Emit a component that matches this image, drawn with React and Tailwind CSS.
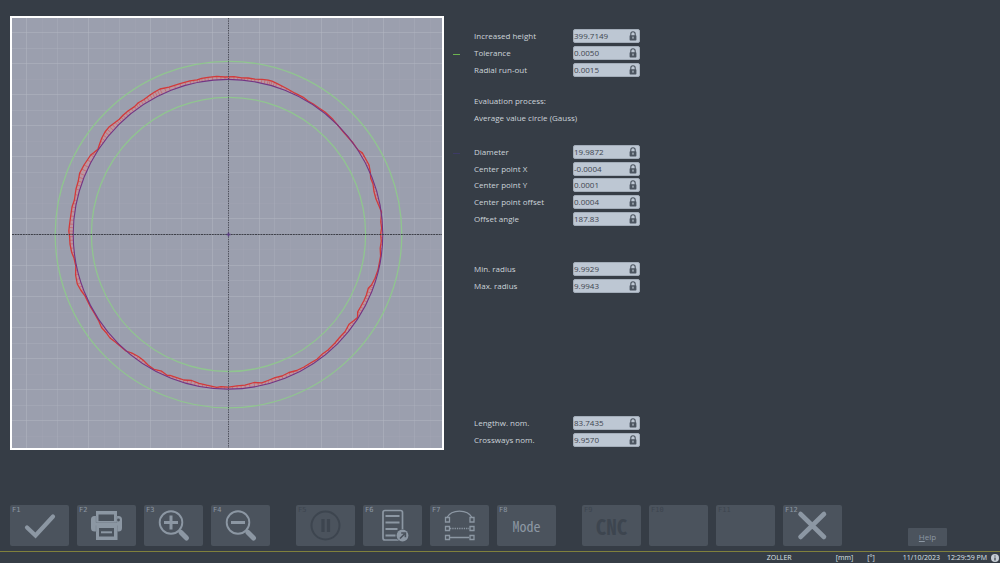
import React from "react";

const CENTER = { x: 228, y: 234.3 };
const MEAN_RADIUS = 154.8;

/* Measured contour, clockwise from the top */
const CONTOUR = [
  [225, 77], [234, 76.6], [241.7, 77.9], [248, 78], [255, 79.2], [262, 79.3], [268.3, 80.2], [272, 81.2], [276.7, 83.3],
  [286.7, 88.5], [295, 93.2], [303.3, 97.3], [308, 101], [313.3, 104], [319, 108], [325, 112], [332.3, 118.7],
  [338.3, 125.8], [344.3, 133], [353.3, 143.3], [358, 150], [362.3, 152.9], [366, 159.5], [369, 165], [370.3, 172],
  [370.7, 178.3], [373, 184], [374, 191.7], [376, 199], [379, 206], [381.5, 212], [380.8, 222], [381.6, 228],
  [380.6, 234], [381.3, 241], [380.2, 248.3], [380.6, 256], [379.6, 261.7], [378, 270], [375, 278.3], [371.5, 285],
  [368.3, 288.3], [366.4, 295], [364, 300.5], [360.5, 307], [357.7, 311.8], [357.5, 317.5], [354, 320.5],
  [349, 324.3], [345, 331.7], [340, 337], [335, 343], [328, 350], [321.7, 354.6], [317, 359.3], [311.7, 362.3],
  [304, 367], [296.7, 370.5], [289, 372.5], [282, 376], [275, 377.7], [268, 380.5], [261.7, 382.8], [254, 382.5],
  [245, 385.2], [237, 385.8], [228.3, 387.2], [221, 386.6], [216.7, 387.3], [206.7, 385.2], [199, 383.4],
  [191.7, 380.5], [184, 380], [176.7, 377.6], [170, 375.3], [167, 375.3], [161.7, 371.2], [154, 369.4],
  [148.3, 365.3], [143, 360], [138.3, 356.5], [132, 353.2], [126, 351], [115, 341.7], [110, 338], [106.7, 333.3],
  [101.5, 327.5], [99, 321.5], [94.5, 313.5], [90.5, 307], [85, 295.9], [81, 290.5], [77.3, 284], [75.6, 275],
  [75.8, 266], [74, 258], [71.7, 252.5], [70, 244], [69.6, 236.7], [68.8, 231], [69.6, 224], [70.7, 216],
  [72, 207], [74.4, 200], [76, 189], [78.3, 181], [79.6, 173.3], [84, 165], [90.7, 155], [94, 152.5],
  [97.9, 149.3], [99.6, 144], [101.7, 138.3], [105, 132], [109.3, 126.7], [115, 122.5], [119.3, 119.3],
  [123, 115.3], [128.3, 110.7], [134.5, 106.6], [138.3, 102.7], [144, 99.5], [150, 95], [155, 91.8], [160, 89],
  [169, 87.2], [180, 83.7], [190, 80.9], [197, 79.9], [201.7, 78.3], [208, 77.4], [216.7, 76.3],
];

const contourPath = "M" + CONTOUR.map((p) => p.join(" ")).join("L") + "Z";
const meanPath =
  `M${CENTER.x - MEAN_RADIUS} ${CENTER.y}` +
  `a${MEAN_RADIUS} ${MEAN_RADIUS} 0 1 1 ${2 * MEAN_RADIUS} 0` +
  `a${MEAN_RADIUS} ${MEAN_RADIUS} 0 1 1 ${-2 * MEAN_RADIUS} 0Z`;

/* Deviation whiskers between the mean circle and the contour */
const whiskers = CONTOUR.flatMap((p, i) => {
  const q = CONTOUR[(i + 1) % CONTOUR.length];
  return [0, 0.5].map((t) => {
    const x = p[0] + (q[0] - p[0]) * t;
    const y = p[1] + (q[1] - p[1]) * t;
    const d = Math.hypot(x - CENTER.x, y - CENTER.y);
    const k = MEAN_RADIUS / d;
    return `M${x.toFixed(1)} ${y.toFixed(1)}L${(CENTER.x + (x - CENTER.x) * k).toFixed(1)} ${(CENTER.y + (y - CENTER.y) * k).toFixed(1)}`;
  });
}).join("");

const STRONG_X = [26, 88, 150, 212, 259, 321, 383];
const SOFT_X = [57, 119, 181, 274, 352, 414];
const FAINT_X = [42, 73, 104, 135, 166, 197, 243, 290, 306, 337, 368, 399, 430];
const STRONG_Y = [32, 63, 94, 125, 156, 218, 265, 296, 327, 358, 389, 420];
const SOFT_Y = [48, 110, 172, 280, 343, 405];
const FAINT_Y = [79, 141, 187, 203, 249, 312, 374, 436];

const vLines = (xs) => xs.map((x) => `M${x + 0.5} 17V449`).join("");
const hLines = (ys) => ys.map((y) => `M11 ${y + 0.5}H443`).join("");

function RunoutChart() {
  return (
    <svg viewBox="10 16 434 434" className="ml-[10px] block aspect-square w-[43.4%] shrink-0" role="img" aria-label="Radial run-out">
      <rect x="10" y="16" width="434" height="434" fill="#fff" />
      <rect x="12" y="18" width="430" height="430" fill="#9b9fae" />
      <g fill="none" stroke="#b3b7c3" strokeWidth="1" clipPath="url(#plot)">
        <path d={vLines(STRONG_X) + hLines(STRONG_Y)} opacity="0.48" />
        <path d={vLines(SOFT_X) + hLines(SOFT_Y)} opacity="0.3" />
        <path d={vLines(FAINT_X) + hLines(FAINT_Y)} opacity="0.12" />
      </g>
      <clipPath id="plot">
        <rect x="12" y="18" width="430" height="430" />
      </clipPath>
      <g fill="none" stroke="#90c58f" strokeWidth="1.3">
        <circle cx="228.5" cy="234.6" r="173.3" />
        <circle cx="228.5" cy="234.4" r="137.1" />
      </g>
      <path d={contourPath + meanPath} fillRule="evenodd" fill="#d98f94" opacity="0.5" />
      <path d={whiskers} fill="none" stroke="#c8484e" strokeWidth="0.7" opacity="0.7" />
      <path d={contourPath} fill="none" stroke="#d23a3a" strokeWidth="1.3" strokeLinejoin="round" />
      <path d={meanPath} fill="none" stroke="#723585" strokeWidth="1.1" />
      <path d="M12 234.5H442" stroke="#3e4049" strokeWidth="1" strokeDasharray="2 0.7" />
      <path d="M228.5 18V448" stroke="#4c4e59" strokeWidth="1" strokeDasharray="1.4 1" />
      <path d="M226.5 234.5h4M228.5 232.5v4" stroke="#5b3f80" strokeWidth="1.3" />
    </svg>
  );
}

function Lock() {
  return (
    <svg viewBox="0 0 8 10" className="h-[10px] w-[8px] shrink-0" aria-hidden="true">
      <path d="M1.8 5V3a2.2 2.2 0 0 1 4.4 0v2" fill="none" stroke="#4c5560" strokeWidth="1.1" />
      <rect x="0.6" y="4.3" width="6.8" height="5.1" rx="0.7" fill="#4c5560" />
      <path d="M4 5.6v2.4M3.4 6.3h1.2" stroke="#b7c1cc" strokeWidth="0.8" />
    </svg>
  );
}

function Field({ label, value, marker = "border-transparent" }) {
  const id = label.toLowerCase().replace(/[^a-z]+/g, "-");
  return (
    <div className="flex items-center">
      <span className={`mr-[14px] h-[4px] w-[7px] border-b ${marker}`} />
      <label htmlFor={id} className="w-[99px] whitespace-nowrap">{label}</label>
      <div className="flex h-[14px] w-[67px] items-center rounded-[2px] border border-[#a3adb9] bg-[#bdc7d3] pr-[2px]">
        <input id={id} readOnly defaultValue={value} className="h-[12px] w-full min-w-0 bg-transparent text-[8px] leading-[12px] font-medium text-[#3d454f] outline-none" />
        <Lock />
      </div>
    </div>
  );
}

const icon = "h-[41px] w-[59px]";

const CheckIcon = () => (
  <svg viewBox="0 0 59 41" className={icon} aria-hidden="true">
    <path d="M17 22.5L25.5 30.5L43 11.5" fill="none" stroke="currentColor" strokeWidth="4.2" strokeLinecap="round" />
  </svg>
);

const PrintIcon = () => (
  <svg viewBox="0 0 59 41" className={icon} aria-hidden="true">
    <path d="M19 6h21v5h1.5a3.5 3.5 0 0 1 3.5 3.5V23a3.5 3.5 0 0 1-3.5 3.5H40.500V35H19v-8.500h-1.500a3.500 3.500 0 0 1-3.500-3.500v-8.500a3.500 3.500 0 0 1 3.500-3.500H19z" fill="currentColor" />
    <path d="M21.500 9.500h15.500V16H21.500zM22 23h15v8.500H22z" fill="#4b535d" />
    <path d="M24 27.300h11" stroke="currentColor" strokeWidth="2" />
    <path d="M19 11v6.500h21V11M19 27v-6.500M40.500 27v-6.500" fill="none" stroke="#4b535d" strokeWidth="0.500" opacity="0.400" />
    <circle cx="41.500" cy="15" r="1.400" fill="#4b535d" />
  </svg>
);

const ZoomIcon = ({ plus }) => (
  <svg viewBox="0 0 59 41" className={icon} aria-hidden="true">
    <circle cx="27" cy="17.500" r="11.300" fill="none" stroke="currentColor" strokeWidth="1.900" />
    <path d={plus ? "M20 17.500h14M27 10.500v14" : "M20 17.500h14"} stroke="currentColor" strokeWidth="3" />
    <path d="M34.500 25l3 3" stroke="currentColor" strokeWidth="2.500" />
    <path d="M37 27.500l5.500 5.500" stroke="currentColor" strokeWidth="5" strokeLinecap="round" />
  </svg>
);

const PauseIcon = () => (
  <svg viewBox="0 0 59 41" className={icon} aria-hidden="true">
    <circle cx="29.500" cy="20.500" r="14" fill="none" stroke="currentColor" strokeWidth="2" />
    <path d="M27 14v13M32.500 14v13" stroke="currentColor" strokeWidth="3.200" />
  </svg>
);

const ReportIcon = () => (
  <svg viewBox="0 0 59 41" className={icon} aria-hidden="true">
    <rect x="20" y="5.500" width="19.500" height="29.500" rx="2" fill="none" stroke="currentColor" strokeWidth="1.700" />
    <path d="M22.500 11h14M22.500 17.500h14M22.500 24h12M22.500 30.500h10" stroke="currentColor" strokeWidth="2.200" />
    <circle cx="39.500" cy="30.500" r="6.500" fill="#4b535d" />
    <circle cx="39.500" cy="30.500" r="5.900" fill="currentColor" />
    <path d="M37 33.500l4.500-4.500M38.200 28h4.200v4.200" fill="none" stroke="#4b535d" strokeWidth="1.600" />
  </svg>
);

const ContourIcon = () => (
  <svg viewBox="0 0 59 41" className={icon} aria-hidden="true">
    <g fill="none" stroke="currentColor" strokeWidth="1.300">
      <path d="M17 12.500C21.500 4 37.500 4 42 12.500M20 32.500h19" />
      <path d="M20 23.500h19" strokeDasharray="1.300 1" />
      <path d="M15.500 12.500h4v4.500h-4zM40 12.500h4v4.500h-4zM15.500 21.500h4v4h-4zM40 21.500h4v4h-4zM15.500 30.500h4v4h-4zM40 30.500h4v4h-4z" />
    </g>
  </svg>
);

const CloseIcon = () => (
  <svg viewBox="0 0 59 41" className={icon} aria-hidden="true">
    <path d="M17.500 9l23.500 23M41 9l-23.500 23" stroke="currentColor" strokeWidth="4.600" strokeLinecap="round" />
  </svg>
);

const KEY_GROUPS = [
  [
    { k: "F1", label: "Confirm", body: <CheckIcon /> },
    { k: "F2", label: "Print", body: <PrintIcon /> },
    { k: "F3", label: "Zoom in", body: <ZoomIcon plus /> },
    { k: "F4", label: "Zoom out", body: <ZoomIcon /> },
  ],
  [
    { k: "F5", label: "Pause", body: <PauseIcon />, off: true },
    { k: "F6", label: "Report", body: <ReportIcon /> },
    { k: "F7", label: "Contour", body: <ContourIcon /> },
    { k: "F8", label: "Mode", body: <span className="text-[14px] leading-[20px] font-medium">Mode</span> },
  ],
  [
    { k: "F9", label: "CNC", body: <span className="text-[21px] leading-[20px] font-bold">CNC</span>, off: true },
    { k: "F10", label: "F10", off: true },
    { k: "F11", label: "F11", off: true },
    { k: "F12", label: "Close", body: <CloseIcon /> },
  ],
];

function KeyButton({ k, label, body, off }) {
  return (
    <button
      type="button"
      aria-label={label}
      disabled={off}
      className={`relative flex h-[41px] w-[59px] items-center justify-center rounded-[2px] bg-[#4b535d] font-['Noto_Sans_Mono_CJK_SC','DejaVu_Sans_Mono',monospace] ${off ? "text-[#3d454f]" : "text-[#8c97a3]"}`}
    >
      <span className="absolute top-px left-[2px] font-['DejaVu_Sans_Mono',monospace] text-[7px] leading-[8px]">{k}</span>
      {body}
    </button>
  );
}

export default function App() {
  return (
    <div className="flex min-h-screen flex-col bg-[#363d46] font-['Open_Sans','Noto_Sans',sans-serif] text-[8px] leading-[10px] text-[#ccd4da]">
      <main className="flex grow items-start pt-[16px]">
        <RunoutChart />
        <form className="ml-[9px] pt-[12px]">
          <div className="grid h-[50px] auto-rows-fr">
            <Field label="Increased height" value="399.7149" />
            <Field label="Tolerance" value="0.0050" marker="border-[#6cb34f]" />
            <Field label="Radial run-out" value="0.0015" />
          </div>
          <div className="mt-[15px] grid h-[33px] auto-rows-fr items-center pl-[21px]">
            <p>Evaluation process:</p>
            <p>Average value circle (Gauss)</p>
          </div>
          <div className="mt-[18px] grid h-[83px] auto-rows-fr">
            <Field label="Diameter" value="19.9872" marker="border-[#3d3a66]" />
            <Field label="Center point X" value="-0.0004" />
            <Field label="Center point Y" value="0.0001" />
            <Field label="Center point offset" value="0.0004" />
            <Field label="Offset angle" value="187.83" />
          </div>
          <div className="mt-[34px] grid h-[33px] auto-rows-fr">
            <Field label="Min. radius" value="9.9929" />
            <Field label="Max. radius" value="9.9943" />
          </div>
          <div className="mt-[121px] grid h-[33px] auto-rows-fr">
            <Field label="Lengthw. nom." value="83.7435" />
            <Field label="Crossways nom." value="9.9570" />
          </div>
        </form>
      </main>

      <nav className="flex items-end justify-between pr-[53px] pb-[5px] pl-[10px]">
        <div className="flex gap-[26px]">
          {KEY_GROUPS.map((group, i) => (
            <div key={i} className="flex gap-[8px]">
              {group.map((key) => (
                <KeyButton key={key.k} {...key} />
              ))}
            </div>
          ))}
        </div>
        <button type="button" className="h-[18px] w-[39px] rounded-[1px] bg-[#4b535d] text-[8px] font-medium text-[#8c97a3]">
          <span className="underline">H</span>elp
        </button>
      </nav>

      <footer className="flex h-[12px] items-center justify-end border-t border-[#80803c] pr-px text-[7px] font-medium text-[#dde2e6]">
        <span className="mr-[44px]">ZOLLER</span>
        <span className="mr-[14px]">[mm]</span>
        <span className="mr-[28px]">[°]</span>
        <time className="mr-[7px]">11/10/2023</time>
        <time className="mr-[4px]">12:29:59 PM</time>
        <svg viewBox="0 0 8 8" className="size-[8px]" aria-hidden="true">
          <circle cx="4" cy="4" r="4" fill="#c6cdd4" />
          <path d="M4 3.400v3M4 1.500v1.100" stroke="#363d46" strokeWidth="1.200" />
        </svg>
      </footer>
    </div>
  );
}
